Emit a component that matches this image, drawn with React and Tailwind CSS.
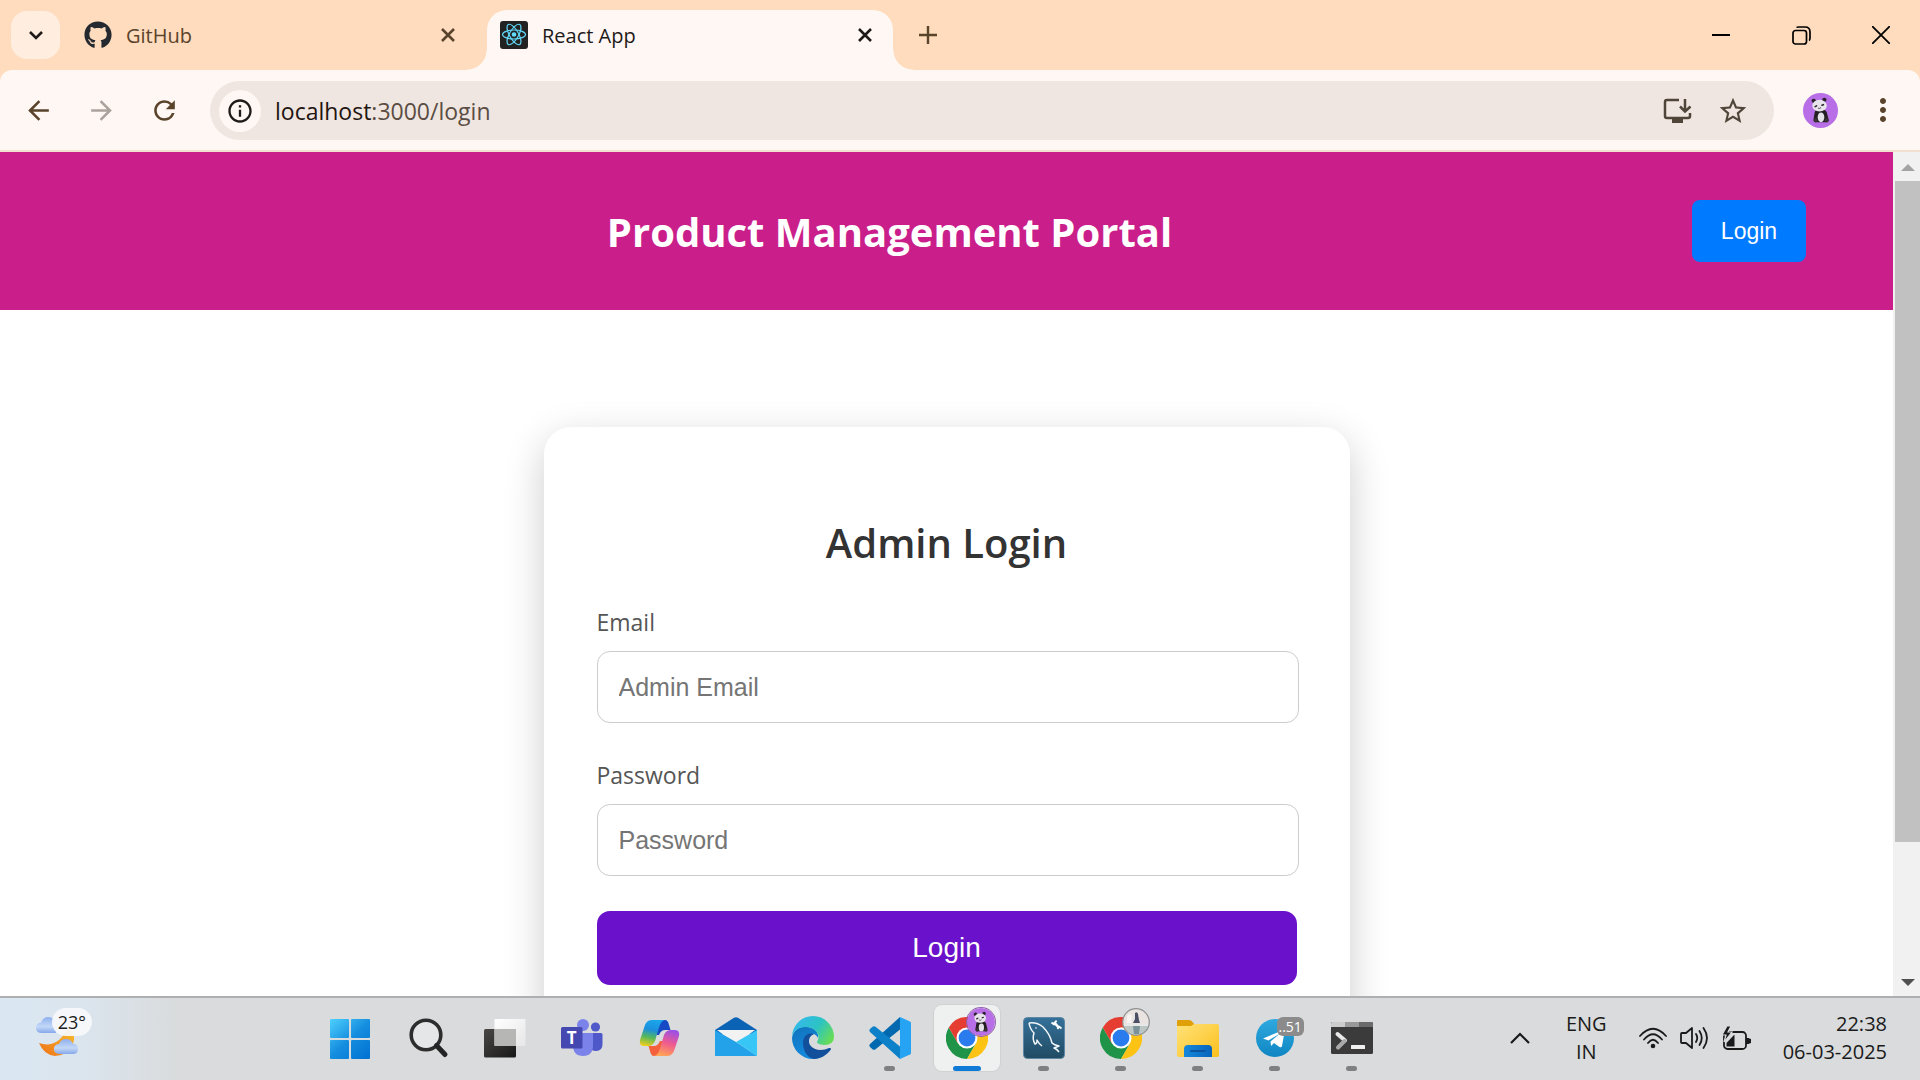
import React from "react";
import { FaGithub } from "react-icons/fa";
import {
  MdArrowBack,
  MdArrowForward,
  MdRefresh,
  MdInfoOutline,
  MdStarOutline,
  MdMoreVert,
} from "react-icons/md";

const UI_FONT = "font-['Segoe_UI','Open_Sans','Noto_Sans',sans-serif]";
const FORM_FONT = "font-['Liberation_Sans',Arial,sans-serif]";

/* ---------- Shared drawings ---------- */

function Panda({ className }) {
  return (
    <svg viewBox="0 0 36 36" className={className} aria-hidden="true">
      <circle cx="18" cy="18" r="18" fill="#b76ee6" />
      <circle cx="11" cy="8" r="2.200" fill="#2a2228" />
      <circle cx="22" cy="7" r="2.200" fill="#2a2228" />
      <path d="M12 20 Q12 17 18 17 Q24 17 24.500 20 L26 26 Q27 30 23 30 H14 Q10 30 11 26Z" fill="#241f22" />
      <ellipse cx="18.500" cy="25" rx="3.400" ry="5" fill="#e4e2e8" />
      <ellipse cx="13" cy="28" rx="2" ry="2.400" fill="#3b3238" />
      <ellipse cx="24.500" cy="28" rx="2" ry="2.400" fill="#3b3238" />
      <ellipse cx="17" cy="13" rx="7.500" ry="6" fill="#e6e3ea" />
      <path d="M12.500 14 l1.500 -.8 M19.500 12.500 l1.500 -.5" stroke="#2a2228" strokeWidth="1.600" strokeLinecap="round" />
      <path d="M15.500 15.500 q1.500 1.200 3 -.5" stroke="#4a4046" strokeWidth="1" fill="none" />
    </svg>
  );
}

function CloseX({ className }) {
  return (
    <svg viewBox="0 0 14 14" className={className} fill="none" stroke="currentColor" strokeWidth="2.600" aria-hidden="true">
      <path d="M1 1 L13 13 M13 1 L1 13" />
    </svg>
  );
}

function ReactLogo() {
  return (
    <svg viewBox="0 0 28 28" className="size-7 shrink-0" aria-hidden="true">
      <rect width="28" height="28" rx="3" fill="#222" />
      <g fill="none" stroke="#61dafb" strokeWidth="1.200">
        <ellipse cx="14" cy="13.500" rx="11.500" ry="4.500" />
        <ellipse cx="14" cy="13.500" rx="11.500" ry="4.500" transform="rotate(60 14 13.500)" />
        <ellipse cx="14" cy="13.500" rx="11.500" ry="4.500" transform="rotate(120 14 13.500)" />
      </g>
      <circle cx="14" cy="13.500" r="2.300" fill="#61dafb" />
    </svg>
  );
}

/* ---------- Browser chrome ---------- */

function TabStrip() {
  return (
    <div className="flex h-[70px] shrink-0 items-stretch bg-[#fedcbd]">
      <button aria-label="Search tabs" className="mt-[11px] ml-[11px] flex h-12 w-[49px] shrink-0 items-center justify-center rounded-2xl bg-[#ffeddf] text-[#1f1a17]">
        <svg viewBox="0 0 16 10" className="h-[10px] w-4" fill="none" stroke="currentColor" strokeWidth="2.600" aria-hidden="true">
          <path d="M2 2 L8 8 L14 2" />
        </svg>
      </button>

      <div className="ml-6 flex w-[403px] shrink-0 items-center pr-[32px] text-[#5a432b]">
        <FaGithub className="size-7 shrink-0 text-[#24292f]" />
        <span className="ml-[14px] pt-[2px] text-xl leading-7">GitHub</span>
        <button aria-label="Close GitHub tab" className="ml-auto">
          <CloseX className="size-[14px]" />
        </button>
      </div>

      <div className="relative mt-[10px] flex w-[406px] shrink-0 items-center rounded-t-[20px] bg-[#fff7f3] pr-[21px] pb-[10px] pl-[13px] text-[#1f1a1a]">
        <span className="absolute -left-5 bottom-0 size-5 bg-[radial-gradient(circle_at_0_0,transparent_19px,#fff7f3_20px)]" />
        <span className="absolute -right-5 bottom-0 size-5 bg-[radial-gradient(circle_at_100%_0,transparent_19px,#fff7f3_20px)]" />
        <ReactLogo />
        <span className="ml-[14px] pt-[2px] text-xl leading-7">React App</span>
        <button aria-label="Close React App tab" className="ml-auto">
          <CloseX className="size-[14px]" />
        </button>
      </div>

      <button aria-label="New tab" className="ml-[26px] text-[#5a432b]">
        <svg viewBox="0 0 18 18" className="size-[18px]" stroke="currentColor" strokeWidth="2.400" aria-hidden="true">
          <path d="M9 0 V18 M0 9 H18" />
        </svg>
      </button>

      <div className="ml-auto flex text-black">
        <button aria-label="Minimize" className="flex w-20 items-center justify-center">
          <svg viewBox="0 0 18 18" className="size-[18px]" stroke="currentColor" strokeWidth="2" aria-hidden="true">
            <path d="M0 9 H18" />
          </svg>
        </button>
        <button aria-label="Restore" className="flex w-20 items-center justify-center">
          <svg viewBox="0 0 19 19" className="size-[19px]" fill="none" stroke="currentColor" strokeWidth="1.700" aria-hidden="true">
            <rect x="1" y="4.500" width="13.500" height="13.500" rx="2.500" />
            <path d="M4.500 1.500 Q5 1 7 1 H13 Q18 1 18 6 V12 Q18 14 17 14.500" />
          </svg>
        </button>
        <button aria-label="Close" className="flex w-[79px] items-center justify-center">
          <svg viewBox="0 0 18 18" className="size-[18px]" stroke="currentColor" strokeWidth="1.800" aria-hidden="true">
            <path d="M0 0 L18 18 M18 0 L0 18" />
          </svg>
        </button>
      </div>
    </div>
  );
}

function Toolbar() {
  return (
    <div className="shrink-0 bg-[#fedcbd]">
      <div className="flex h-[82px] items-start rounded-t-xl border-b-2 border-[#f1dfd2] bg-[#fff7f3] pt-[11px] text-[#5a432b]">
        <div className="ml-[23px] flex h-[59px] items-center gap-8">
          <button aria-label="Back">
            <MdArrowBack className="size-[31px]" />
          </button>
          <button aria-label="Forward" className="text-[#aca29d]">
            <MdArrowForward className="size-[31px]" />
          </button>
          <button aria-label="Reload">
            <MdRefresh className="size-[31px]" />
          </button>
        </div>

        <div className="ml-[30px] flex h-[59px] min-w-0 flex-1 items-center rounded-full bg-[#efe6e1] pr-[25px] pl-[9px]">
          <button aria-label="Site information" className="flex size-[42px] shrink-0 items-center justify-center rounded-full bg-[#fff7f3] text-[#1f1a1a]">
            <MdInfoOutline className="size-7" />
          </button>
          <a href="#login" className="ml-[14px] flex-1 text-[23px] leading-8 text-[#5b4d43]">
            <span className="text-[#1f1510]">localhost</span>:3000/login
          </a>
          <button aria-label="Install app" className="mr-[25px] text-[#504539]">
            <svg viewBox="0 0 29 26" className="h-[26px] w-[29px]" fill="none" stroke="currentColor" strokeWidth="2.500" aria-hidden="true">
              <path d="M16 2 H4 Q2 2 2 4 V18 Q2 20 4 20 H25 Q27 20 27 18 V15" />
              <path d="M22 1 V13 M17 8.500 L22 13.500 L27.500 8.500" />
              <path d="M9 20 H20 V25 H9Z" fill="currentColor" stroke="none" />
            </svg>
          </button>
          <button aria-label="Bookmark this page" className="text-[#504539]">
            <MdStarOutline className="size-8" />
          </button>
        </div>

        <button aria-label="Profile" className="mt-3 ml-[29px]">
          <Panda className="size-[35px]" />
        </button>
        <button aria-label="Browser menu" className="mt-[11px] mr-[19px] ml-[27px]">
          <MdMoreVert className="size-9" />
        </button>
      </div>
    </div>
  );
}

/* ---------- Page ---------- */

function Field({ id, label, type, placeholder }) {
  return (
    <div className="mb-[35px]">
      <label htmlFor={id} className="block text-[23px] leading-[35px] text-[#555]">
        {label}
      </label>
      <input
        id={id}
        type={type}
        placeholder={placeholder}
        className={`mt-[11px] block h-[72px] w-[calc(100%+2px)] rounded-[13px] border border-[#ccc] bg-white px-[21px] text-[25px] leading-8 text-[#333] placeholder:text-[#757575] ${FORM_FONT}`}
      />
    </div>
  );
}

function Page() {
  return (
    <main className="min-w-0 flex-1 overflow-hidden bg-white">
      <header className="flex h-[158px] items-center bg-[#ca1e8a] px-[87px]">
        <h1 className="flex-1 pt-[2px] text-center text-[40px] leading-[56px] font-bold text-white">Product Management Portal</h1>
        <button className={`h-[62px] w-[114px] rounded-lg bg-[#007bff] text-[23px] text-white ${FORM_FONT}`}>
          Login
        </button>
      </header>
      <section className="mx-auto mt-[117px] w-[806px] rounded-[27px] bg-white px-[53px] pt-[88px] pb-[88px] shadow-[0_13px_40px_rgba(0,0,0,0.2)]">
        <h2 className="text-center text-[40px] leading-[56px] font-semibold text-[#333]">Admin Login</h2>
        <form className="mt-[34px]" onSubmit={(e) => e.preventDefault()}>
          <Field id="email" label="Email" type="email" placeholder="Admin Email" />
          <Field id="password" label="Password" type="password" placeholder="Password" />
          <button type="submit" className={`h-[74px] w-full rounded-[13px] bg-[#6a11cb] text-[28px] text-white ${FORM_FONT}`}>
            Login
          </button>
        </form>
      </section>
    </main>
  );
}

function Scrollbar() {
  return (
    <div className="flex w-[27px] shrink-0 flex-col bg-[#f1f1f1] pl-[2px]" aria-hidden="true">
      <div className="flex h-[29px] items-center justify-center pt-[2px]">
        <svg viewBox="0 0 14 7" className="h-[7px] w-[14px] fill-[#a3a3a3]">
          <path d="M7 0 L14 7 H0Z" />
        </svg>
      </div>
      <div className="min-h-0 flex-1">
        <div className="h-[84%] bg-[#c1c1c1]" />
      </div>
      <div className="flex h-[28px] items-center justify-center">
        <svg viewBox="0 0 14 7" className="h-[7px] w-[14px] fill-[#505050]">
          <path d="M0 0 H14 L7 7Z" />
        </svg>
      </div>
    </div>
  );
}

/* ---------- Taskbar icons ---------- */

const svgBox = { viewBox: "0 0 42 42", className: "size-[42px] overflow-visible", "aria-hidden": true };

function WindowsIcon() {
  return (
    <svg {...svgBox}>
      <defs>
        <linearGradient id="win" gradientUnits="userSpaceOnUse" x1="0" y1="0" x2="36" y2="40">
          <stop offset="0" stopColor="#50d3ff" />
          <stop offset=".55" stopColor="#168edf" />
          <stop offset="1" stopColor="#0275d3" />
        </linearGradient>
      </defs>
      <g fill="url(#win)">
        <rect x="0" y="2" width="19" height="19" rx="1" />
        <rect x="21" y="2" width="19" height="19" rx="1" />
        <rect x="0" y="23" width="19" height="19" rx="1" />
        <rect x="21" y="23" width="19" height="19" rx="1" />
      </g>
    </svg>
  );
}

function SearchGlyph() {
  return (
    <svg {...svgBox}>
      <circle cx="19" cy="18" r="14.800" fill="#e4e6e7" stroke="#2d2d2d" strokeWidth="3.600" />
      <path d="M29.500 28.500 L38 37.500" stroke="#242424" strokeWidth="5" strokeLinecap="round" />
    </svg>
  );
}

function TaskViewIcon() {
  return (
    <svg {...svgBox}>
      <defs>
        <linearGradient id="tv" x1="0" y1="0" x2="1" y2="1">
          <stop offset="0" stopColor="#4a4846" />
          <stop offset="1" stopColor="#181818" />
        </linearGradient>
        <linearGradient id="tvF" x1="0" y1="0" x2="1" y2="1">
          <stop offset="0" stopColor="#ffffff" />
          <stop offset="1" stopColor="#e6e6e6" />
        </linearGradient>
      </defs>
      <rect x="0" y="12" width="32" height="28.500" rx="1.500" fill="url(#tv)" />
      <rect x="10.500" y="2" width="31" height="27" rx="1" fill="url(#tvF)" />
      <rect x="10.500" y="12" width="21.500" height="17" fill="#b6b6b5" />
    </svg>
  );
}

function TeamsIcon() {
  return (
    <svg {...svgBox}>
      <circle cx="34.500" cy="10" r="4.600" fill="#5059c9" />
      <path d="M28 16 H40 Q41.500 16 41.500 17.500 V27 Q41.500 34 35 34 Q30 34 28 30Z" fill="#4f58c8" />
      <circle cx="22" cy="8" r="6" fill="#7b83eb" />
      <path d="M12 16 H32 V28 Q32 39 22 39 Q12 39 12 28Z" fill="#7b83eb" />
      <rect x="0" y="10" width="21.500" height="21.500" rx="1.500" fill="#4548b0" />
      <text x="10.700" y="27" textAnchor="middle" fontFamily="Open Sans, sans-serif" fontWeight="700" fontSize="17" fill="#fff">T</text>
    </svg>
  );
}

function CopilotIcon() {
  return (
    <svg {...svgBox}>
      <defs>
        <linearGradient id="cpA" x1="0.400" y1="0" x2="0.200" y2="1">
          <stop offset="0" stopColor="#1aa4ea" />
          <stop offset=".35" stopColor="#1c8fdc" />
          <stop offset=".65" stopColor="#57b85a" />
          <stop offset="1" stopColor="#f5cf1b" />
        </linearGradient>
        <linearGradient id="cpB" x1="0.700" y1="0" x2="0.400" y2="1">
          <stop offset="0" stopColor="#9a50e8" />
          <stop offset=".5" stopColor="#ef5a90" />
          <stop offset="1" stopColor="#ffa357" />
        </linearGradient>
      </defs>
      <g transform="translate(2 3)">
        <path d="M17 0 H25 Q28 0 29 5 L30.500 10 H25 Q21 10 19 15 L14 15Z" fill="#1749c4" />
        <path d="M22 36 H14 Q11 36 10 31 L8.500 26 H14 Q18 26 20 21 L25 21Z" fill="#f4603c" />
        <path d="M5 5 Q7 0 12 0 H25 Q21 1 19.500 6 L15 21 Q13 26 8 26 H4 Q-1 26 0 20Z" fill="url(#cpA)" />
        <path d="M34 31 Q32 36 27 36 H14 Q18 35 19.500 30 L24 15 Q26 10 31 10 H35 Q40 10 39 16Z" fill="url(#cpB)" />
      </g>
    </svg>
  );
}

function MailIcon() {
  return (
    <svg {...svgBox}>
      <path d="M0 13 L19 .7 Q21 -.3 23 .7 L42 13 V17 H0Z" fill="#0b63b5" />
      <path d="M2 13 H40 L21 27Z" fill="#f2f2f2" />
      <path d="M0 13 L21 25 L42 39 H0Z" fill="#23a2ea" />
      <path d="M42 13 V39 L21 25Z" fill="#37c6f6" />
    </svg>
  );
}

function EdgeIcon() {
  return (
    <svg {...svgBox}>
      <defs>
        <linearGradient id="edT" x1="0" y1="0.200" x2="1" y2="0.700">
          <stop offset="0" stopColor="#35b8ee" />
          <stop offset=".55" stopColor="#2cc3c4" />
          <stop offset="1" stopColor="#67dd55" />
        </linearGradient>
        <linearGradient id="edL" x1="0" y1="0" x2="0.500" y2="1">
          <stop offset="0" stopColor="#1173bd" />
          <stop offset="1" stopColor="#148ce0" />
        </linearGradient>
      </defs>
      <path d="M0 21 C1 13 9 8 16 10 C23 11 27 16 26 21 C25 19 23 17 21 17 C16 17 14 24 18 29 C22 35 32 35 38 31 C35 38 28 42 21 42 A21 21 0 0 1 0 21Z" fill="url(#edL)" />
      <path d="M11 26 C11 18 17 15 22 17 C17 19 16 24 18 28 C22 34 31 34 37 31 Q40 30.500 38.500 33 C35 38 28 42 22 42 C15 41 11 33 11 26Z" fill="#12509c" />
      <path d="M0 20 A21 21 0 0 1 42 20 C42 25 38 28 33 28 C29 28 25 27 25 25 C25 24 26.500 23 26.500 20 C26.500 14 20 10 14 10 C7 10 1 14 0 20Z" fill="url(#edT)" />
    </svg>
  );
}

function VsCodeIcon() {
  return (
    <svg {...svgBox}>
      <path d="M31 0 L1 27 Q-.5 28.500 1 30 L3.500 32.300 Q5 33.300 6.500 32.300 L31 12.500Z" fill="#0069b0" />
      <path d="M31 42 L1 15 Q-.5 13.500 1 12 L3.500 9.700 Q5 8.700 6.500 9.700 L31 29.500Z" fill="#0d80ca" />
      <path d="M31 0 L41 4.500 Q42 5 42 6 V36 Q42 37 41 37.500 L31 42Z" fill="#27a3f3" />
    </svg>
  );
}

function ChromeIcon() {
  return (
    <svg viewBox="0 0 48 48" className="size-[42px]" aria-hidden="true">
      <path d="M13.600 30 L3.200 12 A24 24 0 0 0 24 48 L34.400 30Z" fill="#1f9347" />
      <path d="M34.400 30 L24 48 A24 24 0 0 0 44.800 12 H24Z" fill="#fcc314" />
      <path d="M24 12 H44.800 A24 24 0 0 0 3.200 12 L13.600 30Z" fill="#e63d32" />
      <circle cx="24" cy="24" r="12" fill="#fff" />
      <circle cx="24" cy="24" r="9.600" fill="#2a7bee" />
    </svg>
  );
}

function MySqlIcon() {
  return (
    <svg {...svgBox}>
      <defs>
        <linearGradient id="sql" x1="0" y1="0" x2="0" y2="1">
          <stop offset="0" stopColor="#35719a" />
          <stop offset="1" stopColor="#204b63" />
        </linearGradient>
      </defs>
      <rect x=".5" y=".5" width="41" height="41" rx="4" fill="url(#sql)" stroke="#5d87a3" />
      <path
        d="M6 6 Q14 5 20 10 Q27 17 29 26 Q31 28 36 29 L31 31 Q34 32 36 35 M6 6 Q7 12 11 16 Q9 22 12 27 Q14 27 14 23 Q16 27 19 29"
        fill="none"
        stroke="#f3f7fa"
        strokeWidth="1.500"
        strokeLinejoin="round"
      />
      <circle cx="13" cy="11" r=".8" fill="#fff" />
      <path d="M31 5 L36 11" stroke="#fff" strokeWidth="2.600" />
      <path d="M28.500 5.500 L31 7.500 L33.500 3.500 M34.500 12 L36 9.500 L38.500 11.500" fill="none" stroke="#fff" strokeWidth="1.800" />
    </svg>
  );
}

function FolderIcon() {
  return (
    <svg {...svgBox}>
      <defs>
        <linearGradient id="fld" x1="0" y1="0" x2="1" y2="1">
          <stop offset="0" stopColor="#ffe27a" />
          <stop offset="1" stopColor="#fbc01c" />
        </linearGradient>
        <linearGradient id="fldB" x1="0" y1="0" x2="1" y2="0">
          <stop offset="0" stopColor="#1589dc" />
          <stop offset="1" stopColor="#0764bb" />
        </linearGradient>
      </defs>
      <path d="M0 4 Q0 3 1 3 H12 Q14 3 15.500 5 L18 8 V14 H0Z" fill="#dfa008" />
      <path d="M0 9 H14 L17 7 H40 Q42 7 42 9 V38 Q42 40 40 40 H2 Q0 40 0 38Z" fill="url(#fld)" />
      <path d="M7 40 V32 Q7 28 11 28 H31 Q35 28 35 32 V40Z" fill="url(#fldB)" />
      <rect x="13" y="33" width="16" height="2" rx="1" fill="#0a539f" />
    </svg>
  );
}

function TelegramIcon() {
  return (
    <svg {...svgBox}>
      <defs>
        <linearGradient id="tg" x1="0" y1="0" x2="0" y2="1">
          <stop offset="0" stopColor="#2fa9e0" />
          <stop offset="1" stopColor="#0f86c2" />
        </linearGradient>
      </defs>
      <circle cx="21" cy="21" r="19" fill="url(#tg)" />
      <path d="M9 21.500 L29.500 13 Q31 12.500 30.600 14.500 L28 29 Q27.600 31 25.500 30 L20 26 L17 29 L16.500 24.500 L26 16.500 L14.500 23.500Z" fill="#fff" />
    </svg>
  );
}

function TerminalIcon() {
  return (
    <svg {...svgBox}>
      <rect x="0" y="5" width="42" height="32" rx="1.500" fill="#3b3b3b" />
      <path d="M0 10 V6.500 Q0 5 1.500 5 H14 V10Z" fill="#cccccc" />
      <rect x="14" y="5" width="14" height="5" fill="#999" />
      <path d="M28 5 H40.500 Q42 5 42 6.500 V10 H28Z" fill="#6b6b6b" />
      <path d="M6.500 17 L14 23.500" stroke="#e8e8e8" strokeWidth="4" strokeLinecap="round" />
      <path d="M13.500 24 L7 30.500" stroke="#a9a9a9" strokeWidth="4" strokeLinecap="round" />
      <rect x="20" y="28" width="14" height="4" rx=".5" fill="#f0f0f0" />
    </svg>
  );
}

function PhotoBadge() {
  return (
    <svg viewBox="0 0 28 28" className="absolute -top-[9px] left-[22px] size-7" aria-hidden="true">
      <clipPath id="photo">
        <circle cx="14" cy="14" r="13" />
      </clipPath>
      <g clipPath="url(#photo)">
        <rect width="28" height="28" fill="#e9e4e1" />
        <rect y="16" width="28" height="12" fill="#bcc6c4" />
        <path d="M5 8 Q8 4 10 8 L9 15 H5Z" fill="#f7f3f0" />
        <path d="M13 5 Q15 3 16 6 L17 12 L18 15 H11 L13 11Z" fill="#4a4f66" />
        <path d="M11 18 H18 L17 26 H12Z" fill="#7b9298" />
        <path d="M1 17 H27" stroke="#f4f4f2" strokeWidth="1.500" />
      </g>
      <circle cx="14" cy="14" r="13.300" fill="none" stroke="#8f9190" strokeWidth="1.200" />
    </svg>
  );
}

const apps = [
  { name: "Start", icon: <WindowsIcon /> },
  { name: "Search", icon: <SearchGlyph /> },
  { name: "Task view", icon: <TaskViewIcon /> },
  { name: "Teams", icon: <TeamsIcon /> },
  { name: "Copilot", icon: <CopilotIcon /> },
  { name: "Mail", icon: <MailIcon /> },
  { name: "Edge", icon: <EdgeIcon /> },
  { name: "Visual Studio Code", icon: <VsCodeIcon />, open: true },
  {
    name: "Chrome",
    icon: <ChromeIcon />,
    active: true,
    badge: <Panda className="absolute -top-[9px] left-[21px] size-7 rounded-full ring-1 ring-[#8f62ab]" />,
  },
  { name: "MySQL Workbench", icon: <MySqlIcon />, open: true },
  { name: "Chrome second profile", icon: <ChromeIcon />, open: true, badge: <PhotoBadge /> },
  { name: "File Explorer", icon: <FolderIcon />, open: true },
  {
    name: "Telegram",
    icon: <TelegramIcon />,
    open: true,
    badge: (
      <span className="absolute top-0 left-[23px] rounded-md bg-[#8b8b8b] px-[2px] text-sm leading-[19px] text-white">
        ..51
      </span>
    ),
  },
  { name: "Terminal", icon: <TerminalIcon />, open: true },
];

function AppSlot({ app }) {
  return (
    <div className="flex w-[77px] items-center justify-center">
      <button
        aria-label={app.name}
        className={
          app.active
            ? "relative flex h-[66px] w-[66px] items-center justify-center rounded-lg bg-[#eff0f0] shadow-[0_0_0_1px_#cfd1d2]"
            : "relative flex h-[66px] w-[66px] items-center justify-center rounded-lg"
        }
      >
        <span className="relative block size-[42px]">
          {app.icon}
          {app.badge}
        </span>
        {app.active && <span className="absolute bottom-0 h-[5px] w-7 rounded-full bg-[#0f7bd6]" />}
        {app.open && <span className="absolute bottom-0 h-[5px] w-[11px] rounded-full bg-[#7f8081]" />}
      </button>
    </div>
  );
}

function Weather() {
  return (
    <button aria-label="Weather" className="relative ml-9 h-12 w-14">
      <svg viewBox="0 0 56 48" className="h-12 w-14" aria-hidden="true">
        <defs>
          <linearGradient id="moon" x1="1" y1="0" x2="0" y2="1">
            <stop offset="0" stopColor="#f8c32e" />
            <stop offset="1" stopColor="#ef7018" />
          </linearGradient>
          <linearGradient id="cloud" x1="0" y1="0" x2="0" y2="1">
            <stop offset="0" stopColor="#8fb0ef" />
            <stop offset=".6" stopColor="#c3d8f7" />
            <stop offset="1" stopColor="#86a8ea" />
          </linearGradient>
        </defs>
        <path d="M6 25 Q0 25 0 20 Q0 15 5 14.500 Q7 9 12 9 Q17 9 20 13 V25Z" fill="url(#cloud)" />
        <path d="M31 17 Q41 25 37 36 Q31 48 19 48 Q8 47 3 35 Q14 39 23 32 Q30 26 31 17Z" fill="url(#moon)" />
        <path d="M23 46 Q17 45 18 40 Q19 36 23 36 Q25 31 30 31 Q35 31 37 36 Q42 36 42 41 Q42 46 37 46Z" fill="url(#cloud)" />
      </svg>
      <span className="absolute top-0 right-0 rounded-full bg-[#f7f8fa]/95 px-[6px] text-lg leading-7 text-[#1b1b1b]">23°</span>
    </button>
  );
}

function Tray() {
  return (
    <div className="ml-auto flex items-center pr-[33px] pb-[2px] text-[#1a1a1a]">
      <button aria-label="Show hidden icons">
        <svg viewBox="0 0 20 12" className="h-3 w-5" fill="none" stroke="currentColor" strokeWidth="2.200" aria-hidden="true">
          <path d="M1 11 L10 2 L19 11" />
        </svg>
      </button>
      <button aria-label="Input language" className="ml-9 text-center text-xl leading-7">
        ENG
        <br />
        IN
      </button>
      <button aria-label="Network, volume and battery" className="ml-8 flex items-center gap-[13px]">
        <svg viewBox="0 0 28 22" className="h-[22px] w-7" fill="none" stroke="currentColor" strokeWidth="1.800" strokeLinecap="round" aria-hidden="true">
          <path d="M1 9 Q14 -5.500 27 9 M5 12.500 Q14 2 23 12.500 M9 16 Q14 9.500 19 16" />
          <circle cx="14" cy="19" r="2.300" fill="currentColor" stroke="none" />
        </svg>
        <svg viewBox="0 0 29 24" className="h-6 w-[29px]" fill="none" stroke="currentColor" strokeWidth="1.800" strokeLinejoin="round" strokeLinecap="round" aria-hidden="true">
          <path d="M1 8 Q1 7 2 7 H6 L12 2 V22 L6 17 H2 Q1 17 1 16Z" />
          <path d="M16 8 Q18.500 12 16 16 M19.500 5 Q24 12 19.500 19 M23.500 2 Q30.500 12 23.500 22" />
        </svg>
        <svg viewBox="0 0 29 24" className="h-6 w-[29px]" aria-hidden="true">
          <rect x="2" y="6" width="22" height="17" rx="3.500" fill="none" stroke="currentColor" strokeWidth="1.800" />
          <path d="M26 12 L29 13 V17 L26 18Z M24 12 h3 v6 h-3Z M4.500 20.500 V17 L12 9 H12.500 V20.500Z" fill="currentColor" />
          <path d="M5 0 L0 9 H4 L2 16 L10 6 H6 L9 0Z" fill="currentColor" stroke="#d9dbdc" strokeWidth="1.200" />
        </svg>
      </button>
      <button className="ml-[32px] text-right text-xl leading-7">
        22:38
        <br />
        06-03-2025
      </button>
    </div>
  );
}

function Taskbar() {
  return (
    <footer className="flex h-[84px] shrink-0 items-stretch border-t-2 border-[#adafb0] bg-[linear-gradient(90deg,#dae7f2_0,#dbe5ee_80px,#d9dbdc_180px)]">
      <div className="flex w-[312px] shrink-0 items-start pt-[10px]">
        <Weather />
      </div>
      <nav className="flex pb-[2px]" aria-label="Taskbar">
        {apps.map((app) => (
          <AppSlot key={app.name} app={app} />
        ))}
      </nav>
      <Tray />
    </footer>
  );
}

export default function App() {
  return (
    <div className={`flex h-screen flex-col overflow-hidden ${UI_FONT}`}>
      <TabStrip />
      <Toolbar />
      <div className="flex min-h-0 flex-1">
        <Page />
        <Scrollbar />
      </div>
      <Taskbar />
    </div>
  );
}
